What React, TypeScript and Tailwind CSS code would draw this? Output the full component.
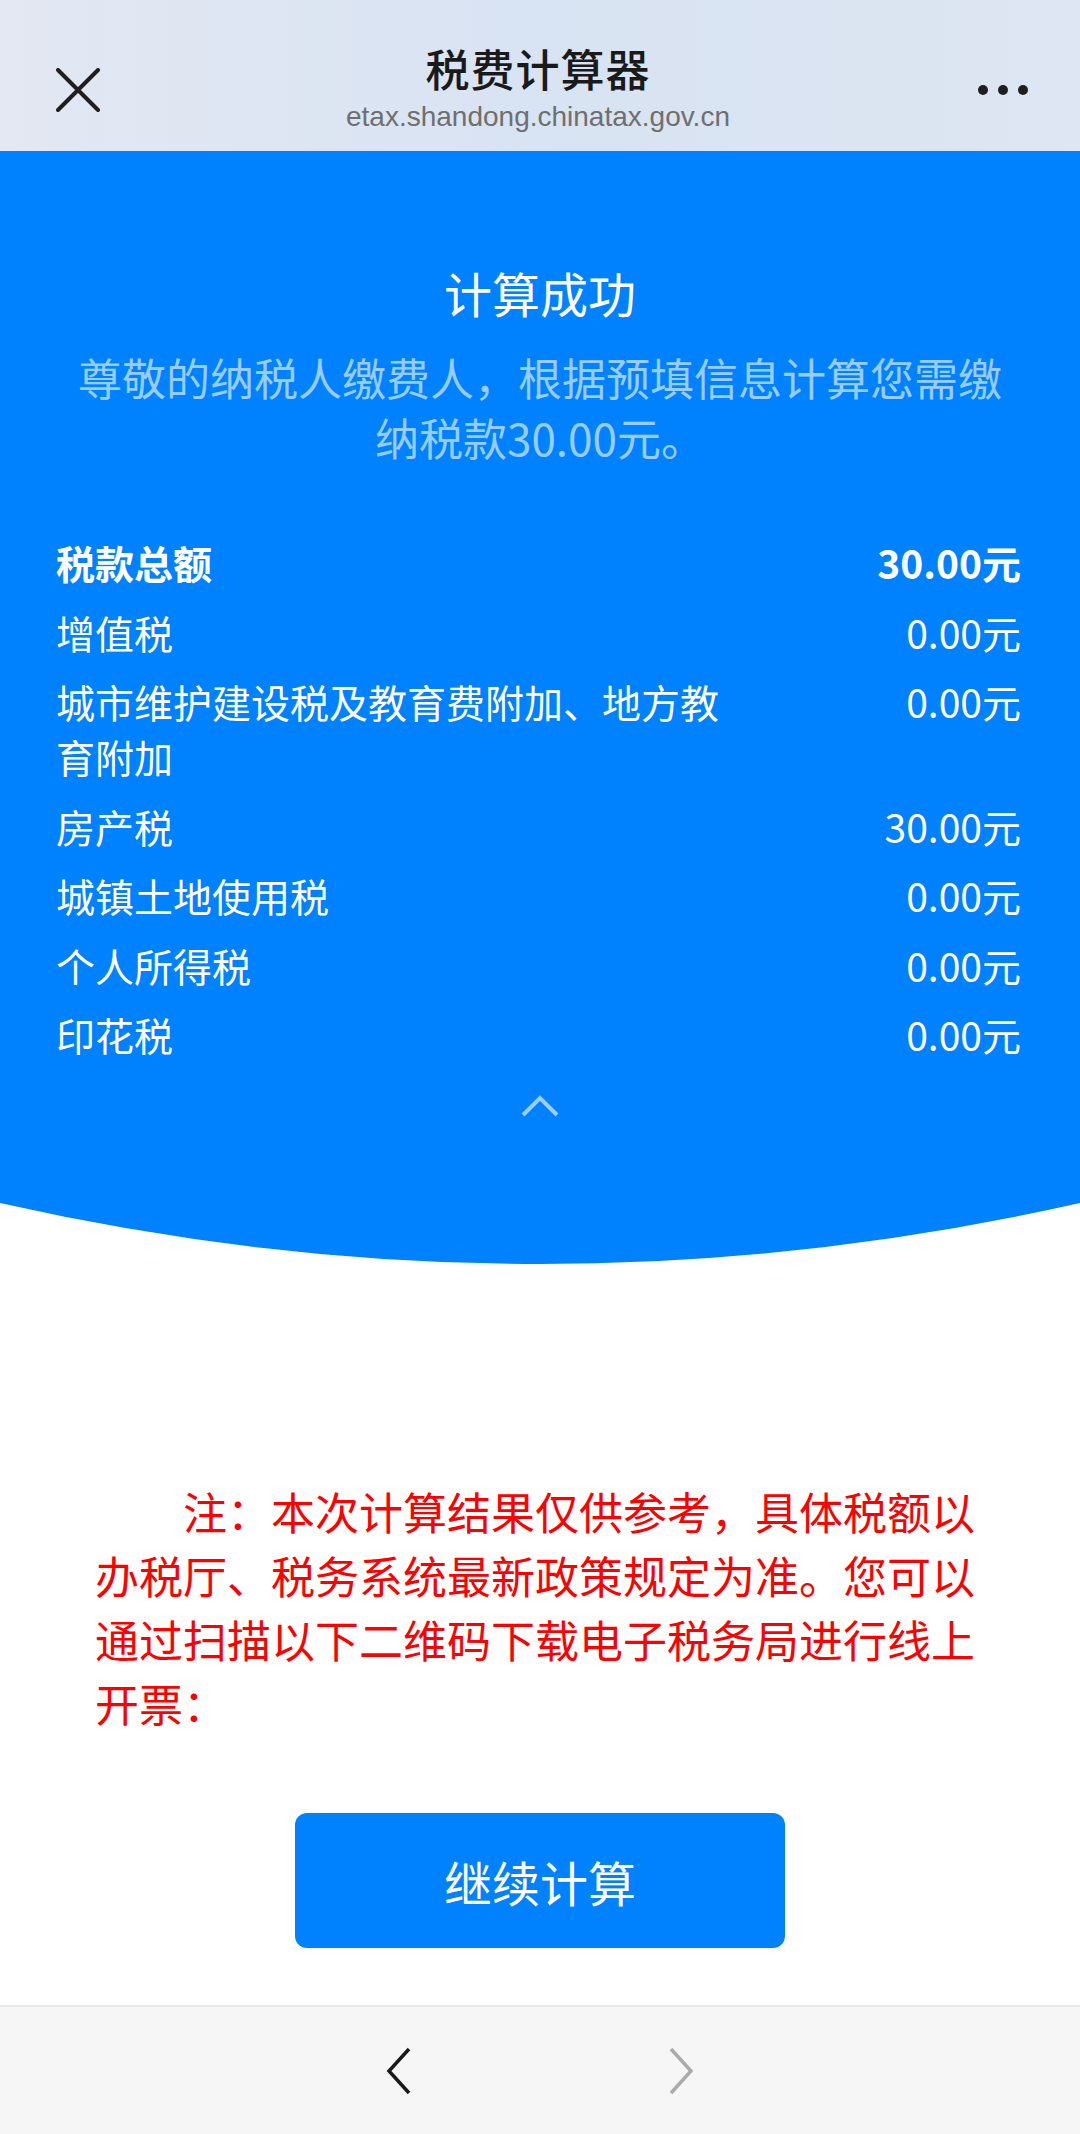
import React from 'react';

const rows = [
  { label: '税款总额', value: '30.00元', bold: true },
  { label: '增值税', value: '0.00元' },
  { label: '城市维护建设税及教育费附加、地方教育附加', value: '0.00元' },
  { label: '房产税', value: '30.00元' },
  { label: '城镇土地使用税', value: '0.00元' },
  { label: '个人所得税', value: '0.00元' },
  { label: '印花税', value: '0.00元' },
];

const font = { fontFamily: '"Noto Sans CJK SC", "Noto Sans", sans-serif' };

const TopBar = () => (
  <header className="flex h-[151px] items-start bg-gradient-to-r from-[#e3e8f2] via-[#d8e3f3] to-[#dde6f1] pl-[56px] pr-[52px]">
    <svg width="44" height="44" viewBox="0 0 44 44" className="mt-[68px] shrink-0">
      <path d="M2 2 L42 42 M42 2 L2 42" stroke="#1f1f1f" strokeWidth="4" strokeLinecap="round" />
    </svg>
    <div className="flex flex-1 flex-col items-center pt-[42px]">
      <h1 className="text-[44px] font-medium leading-[52px] tracking-[1px] text-[#1a1a1a]">税费计算器</h1>
      <p
        className="mt-[6px] text-[28px] leading-[34px] text-[#6f6f6f]"
        style={{ fontFamily: '"Liberation Sans", Arial, sans-serif' }}
      >
        etax.shandong.chinatax.gov.cn
      </p>
    </div>
    <div className="mt-[85px] flex w-[52px] shrink-0 justify-end gap-[10px]">
      <span className="h-[10px] w-[10px] rounded-full bg-[#1f1f1f]" />
      <span className="h-[10px] w-[10px] rounded-full bg-[#1f1f1f]" />
      <span className="h-[10px] w-[10px] rounded-full bg-[#1f1f1f]" />
    </div>
  </header>
);

const ResultPanel = () => (
  <section className="bg-[#0082ff] pt-[111px] text-white">
    <h2 className="text-center text-[48px] leading-[60px]">计算成功</h2>
    <p className="mt-[25px] px-[60px] text-center text-[44px] leading-[60px] text-white/60">
      尊敬的纳税人缴费人，根据预填信息计算您需缴纳税款30.00元。
    </p>
    <div className="mt-[68px] flex flex-col gap-[14.5px] pl-[56px] pr-[59px]">
      {rows.map((r) => (
        <div
          key={r.label}
          className={`flex justify-between text-[39px] leading-[55px] ${r.bold ? 'font-bold' : ''}`}
        >
          <span className="w-[670px]">{r.label}</span>
          <span className="shrink-0">{r.value}</span>
        </div>
      ))}
    </div>
    <div className="flex justify-center pt-[32px] pb-[85px]">
      <svg width="40" height="24" viewBox="0 0 40 24">
        <path d="M3 21 L20 4 L37 21" fill="none" stroke="#9ccfff" strokeWidth="4" />
      </svg>
    </div>
  </section>
);

const Curve = () => (
  <svg className="block h-[61px] w-full" viewBox="0 0 1080 61" preserveAspectRatio="none">
    <path d="M0 0 H1080 Q540 122 0 0 Z" fill="#0082ff" />
  </svg>
);

export default function App() {
  return (
    <div className="flex min-h-[2134px] flex-col bg-white" style={font}>
      <TopBar />
      <ResultPanel />
      <Curve />
      <p className="mx-[95px] mt-[215px] indent-[2em] text-[44px] leading-[64px] text-[#ff0000]">
        注：本次计算结果仅供参考，具体税额以办税厅、税务系统最新政策规定为准。您可以通过扫描以下二维码下载电子税务局进行线上开票：
      </p>
      <div className="mt-[78px] flex justify-center">
        <button className="h-[135px] w-[490px] rounded-[12px] bg-[#0082ff] text-[48px] text-white">
          继续计算
        </button>
      </div>
      <div className="flex-1" />
      <nav className="flex h-[129px] items-center justify-center gap-[256px] border-t-2 border-[#e8e8e8] bg-[#f6f6f6]">
        <svg width="26" height="48" viewBox="0 0 26 48">
          <path d="M23 2 L3 24 L23 46" fill="none" stroke="#1a1a1a" strokeWidth="3.5" />
        </svg>
        <svg width="26" height="48" viewBox="0 0 26 48">
          <path d="M3 2 L23 24 L3 46" fill="none" stroke="#ababab" strokeWidth="3.5" />
        </svg>
      </nav>
    </div>
  );
}
